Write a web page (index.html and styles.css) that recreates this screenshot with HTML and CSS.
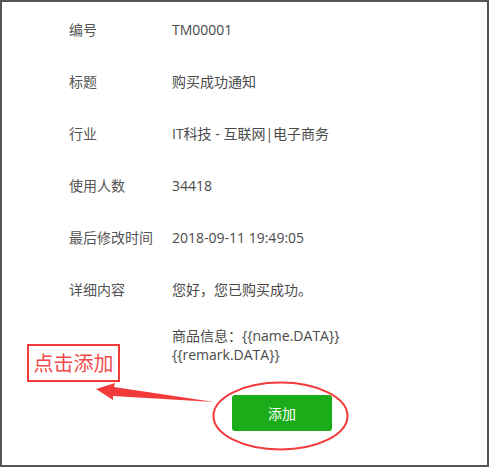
FILE: index.html
```html
<!DOCTYPE html>
<html lang="zh-CN">
<head>
    <meta charset="UTF-8">
    <title>模板详情</title>
    <link rel="stylesheet" href="styles.css">
</head>
<body>
    <div class="frame">
        <div class="info-row">
            <span class="label">编号</span>
            <span class="value">TM00001</span>
        </div>
        <div class="info-row">
            <span class="label">标题</span>
            <span class="value">购买成功通知</span>
        </div>
        <div class="info-row">
            <span class="label">行业</span>
            <span class="value">IT科技 - 互联网|电子商务</span>
        </div>
        <div class="info-row">
            <span class="label">使用人数</span>
            <span class="value">34418</span>
        </div>
        <div class="info-row">
            <span class="label">最后修改时间</span>
            <span class="value">2018-09-11 19:49:05</span>
        </div>
        <div class="info-row detail">
            <span class="label">详细内容</span>
            <div class="value">
                <p>您好，您已购买成功。</p>
                <p class="goods">商品信息：{{name.DATA}}<br>{{remark.DATA}}</p>
            </div>
        </div>
        <div class="actions">
            <button class="add-btn">添加</button>
        </div>

        <!-- annotation -->
        <div class="note">点击添加</div>
        <svg class="marks" width="485" height="463" viewBox="0 0 485 463">
            <ellipse cx="278.5" cy="414" rx="67" ry="33.5" fill="none" stroke="#f23a3a" stroke-width="2"/>
            <polygon points="94,387 113,381 112,385 212,400 111,394 111,398" fill="#f23a3a"/>
        </svg>
    </div>
</body>
</html>
```

FILE: styles.css
```css
* {
    margin: 0;
    padding: 0;
    box-sizing: border-box;
}

body {
    font-family: 'Open Sans', 'Noto Sans CJK SC', sans-serif;
    font-size: 14px;
    color: #4a4a4a;
    background: #fff;
}

.frame {
    position: relative;
    width: 489px;
    height: 467px;
    border: 2px solid #555;
    padding: 2px 0 0 67px;
    background: #fff;
}

.info-row {
    display: flex;
    height: 52px;
    align-items: center;
    line-height: 20px;
}

.info-row .label {
    width: 103px;
    flex-shrink: 0;
    color: #555;
}

.info-row.detail {
    height: auto;
    align-items: flex-start;
    padding-top: 16px;
}

.goods {
    margin-top: 26px;
    line-height: 19px;
}

.actions {
    padding: 31px 0 0 163px;
}

.add-btn {
    width: 100px;
    height: 36px;
    border: none;
    border-radius: 3px;
    background: #1aad19;
    color: #fff;
    font-family: 'Noto Sans CJK SC', sans-serif;
    font-size: 14px;
}

.note {
    position: absolute;
    left: 25px;
    top: 342px;
    width: 93px;
    height: 38px;
    border: 2px solid #f23a3a;
    color: #f04a4a;
    font-family: 'Noto Sans CJK SC', sans-serif;
    font-size: 20px;
    line-height: 34px;
    text-align: center;
}

.marks {
    position: absolute;
    left: 0;
    top: 0;
    pointer-events: none;
}
```
